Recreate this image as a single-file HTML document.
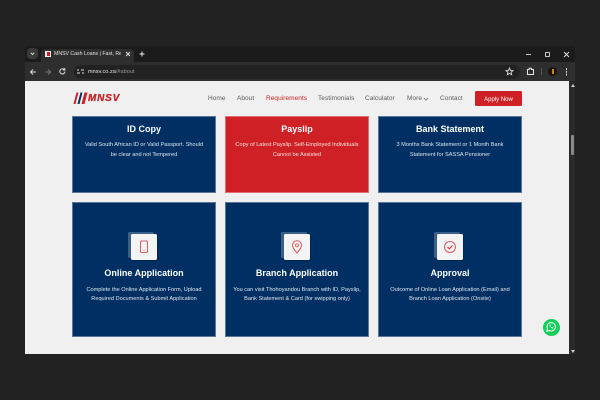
<!DOCTYPE html>
<html><head><meta charset="utf-8"><style>
*{box-sizing:border-box}
html,body{margin:0;padding:0;width:600px;height:400px;overflow:hidden;background:#222;font-family:"Liberation Sans",sans-serif}
.a{position:absolute}
.t{position:absolute;white-space:nowrap}
.card{position:absolute;width:144px;background:#003063;color:#fff;text-align:center;outline:1px solid rgba(255,255,255,.35);outline-offset:-1px}
.card.r{background:#cf2125}
.h{position:absolute;left:0;width:100%;font-size:9px;font-weight:bold;line-height:12px}
.p{position:absolute;left:0;width:100%;font-size:5.6px;line-height:9.7px;color:#dfe5ee}
.card.r .p{color:#f8e0e0}
.nav{position:absolute;top:94px;font-size:6.5px;line-height:9px;color:#5a5a5a;white-space:nowrap;letter-spacing:.05px}
.ib{position:absolute;left:59px;top:32px;width:26px;height:26px;background:#f4f4f4;border-radius:1.5px;box-shadow:1px 1px 1px rgba(0,0,0,.25)}
.ib2{position:absolute;left:56px;top:30px;width:26px;height:26px;background:#3c5f88;border-radius:1.5px}
</style></head><body>
<div class="a" style="left:25px;top:46px;width:550px;height:17px;background:#1b1b1b"></div>
<div class="a" style="left:25px;top:62px;width:550px;height:19px;background:#2e2e2e"></div>
<div class="a" style="left:27px;top:48px;width:11px;height:11px;border-radius:4px;background:#3a3a3a"></div>
<svg class="a" style="left:27px;top:48px" width="11" height="11"><path d="M3.800 4.800L5.500 6.500L7.200 4.800" stroke="#ddd" stroke-width="1" fill="none"/></svg>
<div class="a" style="left:41px;top:49px;width:93px;height:14px;background:#2e2e2e;border-radius:4px 4px 0 0"></div>
<div class="a" style="left:45px;top:51px;width:6px;height:6px;background:#eee"></div>
<div class="a" style="left:46.500px;top:52px;width:3px;height:4px;background:#c62027"></div>
<div class="t" style="left:54px;top:50px;font-size:5.2px;line-height:8px;color:#e2e2e2;width:67px;overflow:hidden">MNSV Cash Loans | Fast, Reliable</div>
<svg class="a" style="left:125px;top:51px" width="6" height="6"><path d="M1 1L5 5M5 1L1 5" stroke="#ddd" stroke-width="1"/></svg>
<svg class="a" style="left:139px;top:51px" width="6" height="6"><path d="M3 .5V5.500M.5 3H5.500" stroke="#eee" stroke-width="1"/></svg>
<svg class="a" style="left:29px;top:68px" width="8" height="8"><path d="M7 4H1.500M4 1.500L1.500 4L4 6.500" stroke="#ddd" stroke-width="1" fill="none"/></svg>
<svg class="a" style="left:44px;top:68px" width="8" height="8"><path d="M1 4H6.500M4 1.500L6.500 4L4 6.500" stroke="#777" stroke-width="1" fill="none"/></svg>
<svg class="a" style="left:58px;top:67px" width="9" height="9"><path d="M7 4.500A2.600 2.600 0 1 1 6 2.300M6.800 1V3H4.800" stroke="#ddd" stroke-width="1" fill="none"/></svg>
<div class="a" style="left:74px;top:65px;width:446px;height:14px;border-radius:7px;background:#222"></div>
<svg class="a" style="left:76px;top:67px" width="9" height="9"><path d="M1 3H3M5 3H8M1 6H4M6 6H8" stroke="#ddd" stroke-width="1"/></svg>
<div class="t" style="left:88px;top:68px;font-size:5.6px;line-height:8px;color:#e2e2e2">mnsv.co.za<span style="color:#999">/#about</span></div>
<svg class="a" style="left:505px;top:67px" width="9" height="9"><path d="M4.500 1L5.500 3.400L8 3.600L6.100 5.200L6.700 7.700L4.500 6.400L2.300 7.700L2.900 5.200L1 3.600L3.500 3.400Z" stroke="#ddd" stroke-width=".9" fill="none"/></svg>
<svg class="a" style="left:526px;top:67px" width="9" height="9"><path d="M1.500 2.500H3.200V1.300H5.500V2.500H7.500V7.500H1.500Z" stroke="#e6e6e6" stroke-width="1" fill="none"/></svg>
<div class="a" style="left:541px;top:68px;width:1px;height:7px;background:#555"></div>
<div class="a" style="left:548px;top:67px;width:9px;height:9px;border-radius:50%;background:#1a1208"></div>
<div class="a" style="left:551.500px;top:69px;width:2px;height:5px;background:#c8861c"></div>
<div class="a" style="left:565.500px;top:68px;width:1.500px;height:1.500px;background:#ddd;box-shadow:0 2.800px #ddd,0 5.600px #ddd"></div>
<div class="a" style="left:526px;top:53.500px;width:5px;height:1px;background:#ccc"></div>
<div class="a" style="left:545px;top:52px;width:5px;height:5px;border:1px solid #ccc;border-radius:1px"></div>
<svg class="a" style="left:563px;top:51px" width="7" height="7"><path d="M1 1L6 6M6 1L1 6" stroke="#ddd" stroke-width="1"/></svg>

<div class="a" style="left:25px;top:81px;width:544px;height:273px;background:#f0f0f0"></div>
<div class="a" style="left:569px;top:81px;width:6px;height:273px;background:#2a2a2a"></div>
<div class="a" style="left:571px;top:135px;width:3px;height:20px;background:#8a8a8a;border-radius:1px"></div>
<div class="a" style="left:570.500px;top:84px;width:0;height:0;border:2px solid transparent;border-bottom:3px solid #ccc;border-top:0"></div>
<div class="a" style="left:570.500px;top:350px;width:0;height:0;border:2px solid transparent;border-top:3px solid #ccc;border-bottom:0"></div>

<svg class="a" style="left:73px;top:92px" width="16" height="13"><path d="M3.500 .5H5.500L2.500 12H.5Z" fill="#cf2125"/><path d="M7.500 .5H9.500L6.500 12H4.500Z" fill="#003063"/><path d="M11.500 .5H14.500L11.500 12H8.500Z" fill="#cf2125"/></svg>
<div class="t" style="left:88px;top:93px;font-size:10px;line-height:11px;font-weight:bold;font-style:italic;color:#cf2125;letter-spacing:.8px;-webkit-text-stroke:.3px #cf2125">MNSV</div>

<div class="nav" style="left:208px">Home</div>
<div class="nav" style="left:237px">About</div>
<div class="nav" style="left:266px;color:#cf2125">Requirements</div>
<div class="nav" style="left:318px">Testimonials</div>
<div class="nav" style="left:365px">Calculator</div>
<div class="nav" style="left:407px">More</div>
<svg class="a" style="left:422.500px;top:96.500px" width="6" height="5"><path d="M.8 1L3 3.200L5.200 1" stroke="#666" stroke-width=".7" fill="none"/></svg>
<div class="nav" style="left:440px">Contact</div>
<div class="a" style="left:475px;top:91px;width:47px;height:15px;background:#cf2125;border-radius:1.500px;color:#fff;font-size:6px;line-height:16px;text-align:center;padding-top:.5px">Apply Now</div>

<div class="card" style="left:72px;top:116px;height:76.500px"><div class="h" style="top:6.500px">ID Copy</div><div class="p" style="top:25px">Valid South African ID or Valid Passport. Should<br>be clear and not Tempered</div></div>
<div class="card r" style="left:225px;top:116px;height:76.500px"><div class="h" style="top:6.500px">Payslip</div><div class="p" style="top:25px">Copy of Latest Payslip. Self-Employed Individuals<br>Cannot be Assisted</div></div>
<div class="card" style="left:378px;top:116px;height:76.500px"><div class="h" style="top:6.500px">Bank Statement</div><div class="p" style="top:25px">3 Months Bank Statement or 1 Month Bank<br>Statement for SASSA Pensioner</div></div>

<div class="card" style="left:72px;top:202px;height:135px"><div class="ib2"></div><div class="ib"></div>
<svg class="a" style="left:66px;top:38px" width="12" height="14"><rect x="2.500" y="1" width="7" height="11.500" rx="1" stroke="#dc5a5c" stroke-width="1" fill="none"/><path d="M5.500 10.500H6.500" stroke="#dc5a5c"/></svg>
<div class="h" style="top:65px">Online Application</div><div class="p" style="top:83.500px">Complete the Online Application Form, Upload<br>Required Documents &amp; Submit Application</div></div>
<div class="card" style="left:225px;top:202px;height:135px"><div class="ib2"></div><div class="ib"></div>
<svg class="a" style="left:66px;top:38px" width="12" height="14"><path d="M6 13C3.500 10 1.500 7.800 1.500 5.300A4.500 4.500 0 0 1 10.500 5.300C10.500 7.800 8.500 10 6 13Z" stroke="#dc5a5c" stroke-width="1" fill="none"/><circle cx="6" cy="5.300" r="1.500" stroke="#dc5a5c" stroke-width=".9" fill="none"/></svg>
<div class="h" style="top:65px">Branch Application</div><div class="p" style="top:83.500px">You can visit Thohoyandou Branch with ID, Payslip,<br>Bank Statement &amp; Card (for swipping only)</div></div>
<div class="card" style="left:378px;top:202px;height:135px"><div class="ib2"></div><div class="ib"></div>
<svg class="a" style="left:65px;top:38px" width="14" height="14"><circle cx="7" cy="7" r="5.500" stroke="#dc5a5c" stroke-width="1" fill="none"/><path d="M4.500 7L6.400 8.800L9.600 5.400" stroke="#cf2125" stroke-width="1" fill="none"/></svg>
<div class="h" style="top:65px">Approval</div><div class="p" style="top:83.500px">Outcome of Online Loan Application (Email) and<br>Branch Loan Application (Onsite)</div></div>

<div class="a" style="left:542.500px;top:318.500px;width:17px;height:17px;border-radius:50%;background:#12cf5a"></div>
<svg class="a" style="left:543px;top:319px" width="16" height="16"><path d="M3.800 12.300L4.500 9.800A4.200 4.200 0 1 1 6.200 11.500Z" stroke="#fff" stroke-width="1" fill="none"/><path d="M6.500 5.800C6.300 7.600 8.200 9.700 10 9.500L10.200 8.600L9 8L8.500 8.500C8 8.300 7.600 7.900 7.400 7.300L7.900 6.900L7.300 5.600Z" fill="#fff"/></svg>
</body></html>
